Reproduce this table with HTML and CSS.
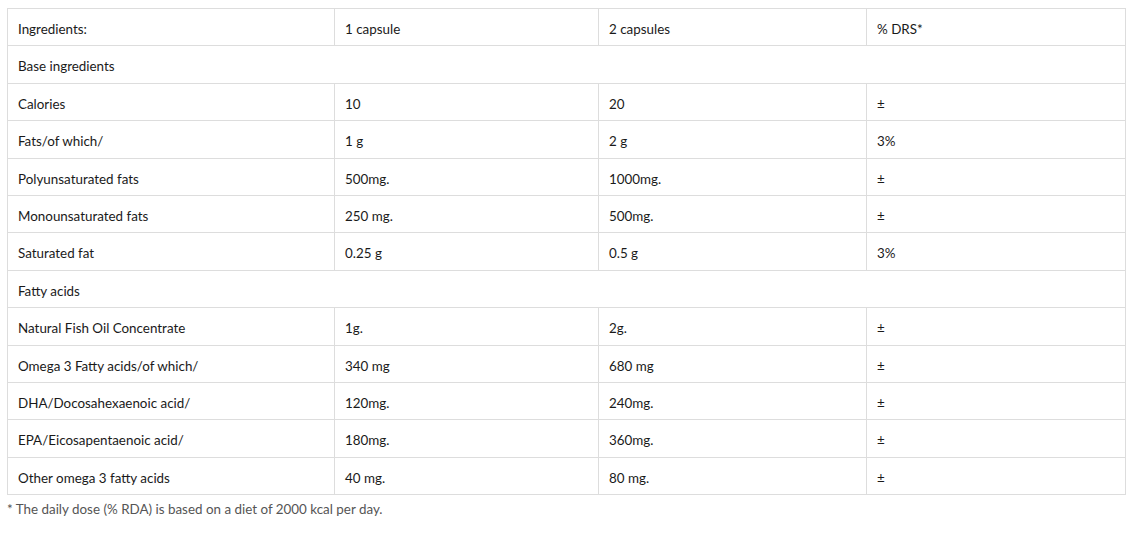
FILE: index.html
```html
<!DOCTYPE html>
<html lang="en">
<head>
<meta charset="utf-8">
<title>Ingredients</title>
<link rel="stylesheet" href="styles.css">
</head>
<body>
<div class="wrap">
  <table class="nutri">
    <colgroup>
      <col class="c1"><col class="c2"><col class="c3"><col class="c4">
    </colgroup>
    <tbody>
      <tr><td>Ingredients:</td><td>1 capsule</td><td>2 capsules</td><td>% DRS*</td></tr>
      <tr><td colspan="4">Base ingredients</td></tr>
      <tr><td>Calories</td><td>10</td><td>20</td><td>±</td></tr>
      <tr><td>Fats/of which/</td><td>1 g</td><td>2 g</td><td>3%</td></tr>
      <tr><td>Polyunsaturated fats</td><td>500mg.</td><td>1000mg.</td><td>±</td></tr>
      <tr><td>Monounsaturated fats</td><td>250 mg.</td><td>500mg.</td><td>±</td></tr>
      <tr><td>Saturated fat</td><td>0.25 g</td><td>0.5 g</td><td>3%</td></tr>
      <tr><td colspan="4">Fatty acids</td></tr>
      <tr><td>Natural Fish Oil Concentrate</td><td>1g.</td><td>2g.</td><td>±</td></tr>
      <tr><td>Omega 3 Fatty acids/of which/</td><td>340 mg</td><td>680 mg</td><td>±</td></tr>
      <tr><td>DHA/Docosahexaenoic acid/</td><td>120mg.</td><td>240mg.</td><td>±</td></tr>
      <tr><td>EPA/Eicosapentaenoic acid/</td><td>180mg.</td><td>360mg.</td><td>±</td></tr>
      <tr><td>Other omega 3 fatty acids</td><td>40 mg.</td><td>80 mg.</td><td>±</td></tr>
    </tbody>
  </table>
  <p class="note">* The daily dose (% RDA) is based on a diet of 2000 kcal per day.</p>
</div>
</body>
</html>
```

FILE: styles.css
```css
html, body {
  margin: 0;
  padding: 0;
  background: #fff;
}
.wrap {
  padding: 8px 0 0 7px;
  font-family: "Lato", "Noto Sans", sans-serif;
  font-size: 13.4px;
  color: #1a1a1a;
}
.nutri {
  border-collapse: collapse;
  table-layout: fixed;
  width: 1118px;
}
.c1 { width: 327px; }
.c2 { width: 264px; }
.c3 { width: 268px; }
.c4 { width: 259px; }
.nutri td {
  border: 1px solid #ddd;
  padding: 10px 10px 6px 10px;
  line-height: 20.4px;
  vertical-align: middle;
}
.note {
  margin: 4px 0 0 0;
  color: #555;
  line-height: 20px;
}
```
